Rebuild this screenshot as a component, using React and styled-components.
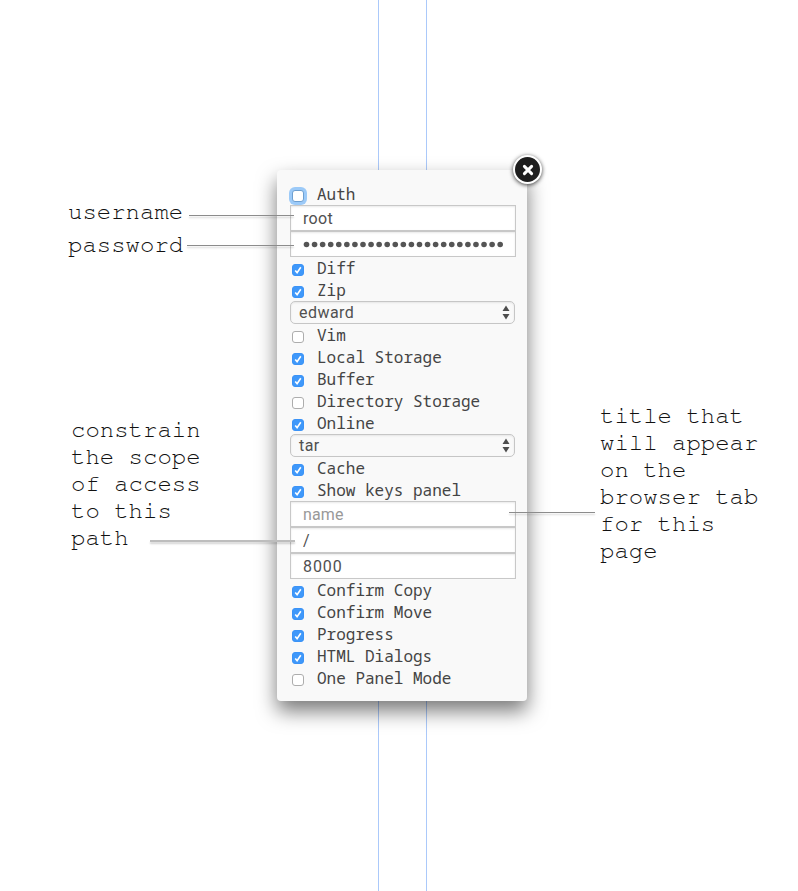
import React from "react";
import styled, { createGlobalStyle } from "styled-components";

const Global = createGlobalStyle`
  * { box-sizing: border-box; }
  body { margin: 0; background: #fff; }
`;

const Page = styled.main`
  position: relative;
  display: grid;
  grid-template-columns: 277px 250px 1fr;
  width: 798px;
  height: 891px;
  overflow: hidden;
`;

const Notes = styled.aside`
  display: flex;
  flex-direction: column;
  align-items: flex-start;
`;

const Note = styled.p`
  margin: ${(p) => p.$margin};
  font: 24px/27px "Nimbus Mono PS", FreeMono, "Liberation Mono", monospace;
  color: #111;
  white-space: pre-line;
`;

const Center = styled.section`
  display: flex;
  flex-direction: column;
`;

const Guides = styled.div`
  height: ${(p) => p.$height}px;
  width: 49px;
  margin-left: 101px;
  border: solid #abc9fa;
  border-width: 0 1px;
`;

const Dialog = styled.form`
  position: relative;
  z-index: 1;
  height: 531px;
  padding: 13px 11px 12px 13px;
  border-radius: 4px;
  background: #f9f9f9;
  box-shadow: 0 10px 20px rgba(0, 0, 0, 0.53);
`;

const CloseButton = styled.button`
  position: absolute;
  top: -15px;
  right: -15px;
  width: 29px;
  height: 29px;
  padding: 0;
  display: grid;
  place-items: center;
  border: 2.5px solid #fff;
  border-radius: 50%;
  background: #1e1e1e;
  box-shadow: 0 1px 4px rgba(0, 0, 0, 0.75);
`;

const Option = styled.label`
  display: flex;
  align-items: flex-start;
  height: 22px;
  padding-left: 2px;
  font: 16px/22px "Droid Sans Mono", "Noto Sans Mono", "DejaVu Sans Mono", monospace;
  color: #444;
  white-space: pre;
`;

const Box = styled.span`
  flex: none;
  width: 12px;
  height: 12px;
  margin: 7px 13px 0 0;
  border: 1px solid ${(p) => (p.$checked ? "#3b93f7" : p.$focused ? "#6d9fd0" : "#adadad")};
  border-radius: 3px;
  background: ${(p) => (p.$checked ? "#3f98fa" : "#fff")};
  box-shadow: ${(p) => (p.$focused ? "0 0 0 3px #9ccaf8" : "none")};
  svg { display: block; }
`;

const Field = styled.input`
  display: block;
  width: 226px;
  height: 26px;
  padding: 0 12px;
  border: 1px solid #c8c8c8;
  border-radius: 0;
  outline: 0;
  background: #fff;
  box-shadow: inset 0 1px 2px rgba(0, 0, 0, 0.09);
  font: 16px/24px Roboto, sans-serif;
  letter-spacing: ${(p) => p.$tracking || 0}px;
  color: #505050;
  &::placeholder { color: #999; opacity: 1; }
`;

const Password = styled(Field).attrs({ as: "div" })`
  display: flex;
  align-items: center;
  svg { display: block; flex: none; }
`;

const Select = styled.div`
  display: flex;
  align-items: center;
  justify-content: space-between;
  width: 225px;
  height: 23px;
  padding: 0 4px 0 8px;
  border: 1px solid #c6c6c6;
  border-radius: 5px;
  background: #f9f9f9;
  box-shadow: inset 0 1px 2px rgba(0, 0, 0, 0.08);
  font: 16px/20px Roboto, sans-serif;
  letter-spacing: 0.45px;
  color: #505050;
`;

const Connector = styled.i`
  position: absolute;
  z-index: 2;
  left: ${(p) => p.$x}px;
  top: ${(p) => p.$y}px;
  width: ${(p) => p.$width}px;
  height: ${(p) => (p.$soft ? 2 : 1)}px;
  background: ${(p) => (p.$soft ? "#bdbdbd" : "#8c8c8c")};
  box-shadow: 0 2px 2px rgba(0, 0, 0, 0.18);
`;

function Check({ label, checked, focused }) {
  return (
    <Option>
      <Box $checked={checked} $focused={focused}>
        {checked && (
          <svg width="10" height="10" viewBox="0 0 10 10" fill="none">
            <path d="M2.2 5.4 4.1 7.6 7.8 2.2" stroke="#fff" strokeWidth="1.6" />
          </svg>
        )}
      </Box>
      {label}
    </Option>
  );
}

function Picker({ value }) {
  return (
    <Select>
      {value}
      <svg width="8" height="15" viewBox="0 0 8 15" fill="#4d4d4d">
        <path d="M4 0.5 7.5 6H0.5ZM4 14.5 0.5 9H7.5Z" />
      </svg>
    </Select>
  );
}

const dots = Array.from({ length: 25 }, (_, i) => i);

export default function App() {
  return (
    <>
      <Global />
      <Page>
        <Notes>
          <Note $margin="199px 0 0 68px">username</Note>
          <Note $margin="6px 0 0 68px">password</Note>
          <Note $margin="158px 0 0 71px">{"constrain\nthe scope\nof access\nto this\npath"}</Note>
        </Notes>
        <Center>
          <Guides $height={170} />
          <Dialog>
            <CloseButton type="button" aria-label="Close">
              <svg width="12" height="12" viewBox="0 0 12 12">
                <path
                  d="M2.4 2.4 9.6 9.6M9.6 2.4 2.4 9.6"
                  stroke="#fff"
                  strokeWidth="3"
                  strokeLinecap="round"
                />
              </svg>
            </CloseButton>
            <Check label="Auth" focused />
            <Field defaultValue="root" $tracking={0.35} />
            <Password>
              <svg width="204" height="8" viewBox="0 0 204 8" fill="#555">
                {dots.map((i) => (
                  <circle key={i} cx={3.5 + i * 8.07} cy="4.5" r="2.8" />
                ))}
              </svg>
            </Password>
            <Check label="Diff" checked />
            <Check label="Zip" checked />
            <Picker value="edward" />
            <Check label="Vim" />
            <Check label="Local Storage" checked />
            <Check label="Buffer" checked />
            <Check label="Directory Storage" />
            <Check label="Online" checked />
            <Picker value="tar" />
            <Check label="Cache" checked />
            <Check label="Show keys panel" checked />
            <Field placeholder="name" $tracking={0.15} />
            <Field defaultValue="/" />
            <Field defaultValue="8000" $tracking={0.9} />
            <Check label="Confirm Copy" checked />
            <Check label="Confirm Move" checked />
            <Check label="Progress" checked />
            <Check label="HTML Dialogs" checked />
            <Check label="One Panel Mode" />
          </Dialog>
          <Guides $height={190} />
        </Center>
        <Notes>
          <Note $margin="403px 0 0 73px">
            {"title that\nwill appear\non the\nbrowser tab\nfor this\npage"}
          </Note>
        </Notes>
        <Connector $x={189} $y={215} $width={105} />
        <Connector $x={187} $y={245} $width={107} />
        <Connector $x={150} $y={540} $width={145} $soft />
        <Connector $x={509} $y={512} $width={86} />
      </Page>
    </>
  );
}
